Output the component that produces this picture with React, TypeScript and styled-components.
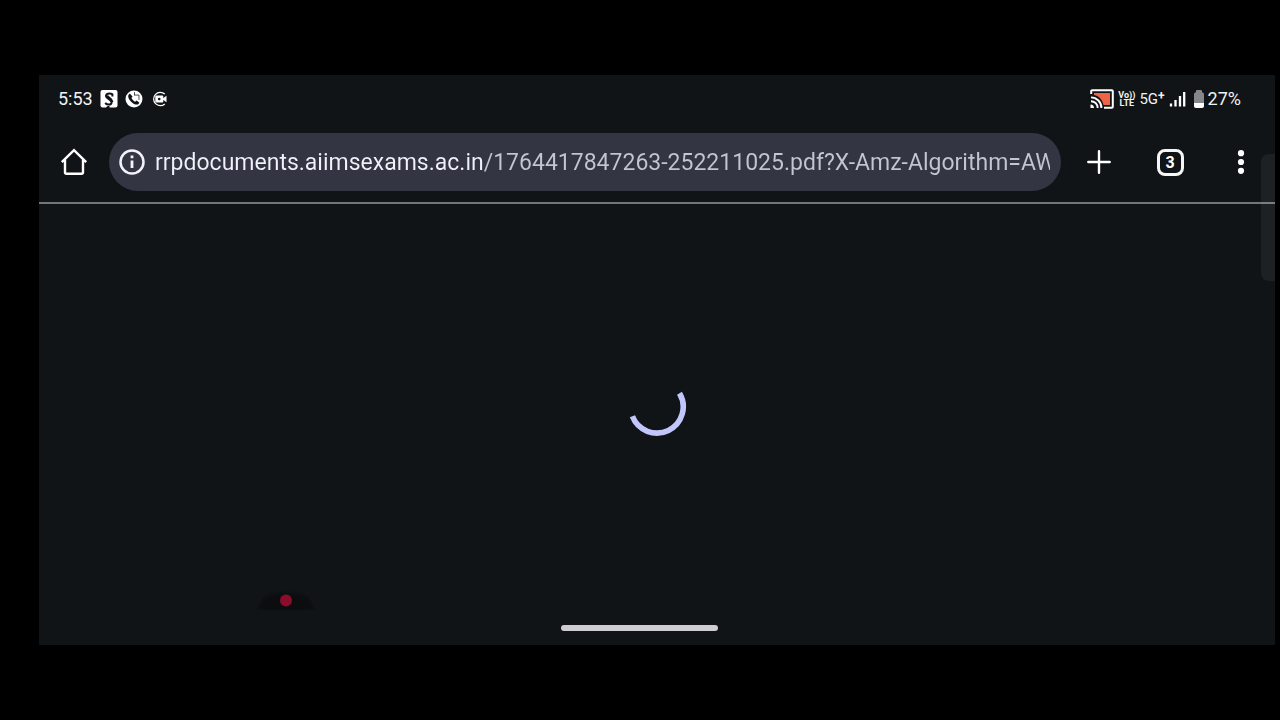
import React from "react";
import styled, { createGlobalStyle } from "styled-components";

const GlobalStyle = createGlobalStyle`
  *, *::before, *::after { box-sizing: border-box; }
  body { margin: 0; background: #000; font-family: Roboto, "Noto Sans", sans-serif; }
`;

const Page = styled.div`
  display: flex;
  min-height: 100vh;
  padding: 75px 5px 75px 39px;
  background: #000;
`;

const Screen = styled.div`
  position: relative;
  display: flex;
  flex: 1;
  flex-direction: column;
  min-width: 0;
  background: #101416;
  color: #fff;
`;

const StatusBar = styled.header`
  display: flex;
  align-items: center;
  justify-content: space-between;
  height: 47px;
  padding: 0 34px 0 19px;
`;

const StatusGroup = styled.div<{ $gap: number }>`
  display: flex;
  align-items: center;
  gap: ${(p) => p.$gap}px;
`;

const StatusText = styled.span<{ $size: number }>`
  font-size: ${(p) => p.$size}px;
  line-height: 20px;
  color: #f1f2f3;
`;

const NetworkLabel = styled.span`
  display: flex;
  align-items: flex-start;
  font-size: 15px;
  line-height: 20px;
  color: #f1f2f3;
`;

const NetworkPlus = styled.span`
  font-size: 12px;
  font-weight: 700;
  line-height: 15px;
`;

const VolteLabel = styled.span`
  display: flex;
  flex-direction: column;
  align-items: center;
  font-size: 9px;
  font-weight: 700;
  line-height: 8px;
  color: #f1f2f3;
`;

const Battery = styled.span`
  display: flex;
  padding-left: 4px;
`;

const Toolbar = styled.nav`
  display: flex;
  align-items: center;
  padding: 11px 17px 11px 18px;
  border-bottom: 2px solid #737678;
`;

const IconButton = styled.button`
  display: flex;
  flex: none;
  align-items: center;
  justify-content: center;
  width: 34px;
  height: 34px;
  padding: 0;
  border: 0;
  background: none;
  color: #fff;
  cursor: pointer;
`;

const AddressBar = styled.form`
  display: flex;
  flex: 1;
  align-items: center;
  gap: 6px;
  min-width: 0;
  height: 58px;
  margin: 0 21px 0 18px;
  padding: 0 11px 0 6px;
  border-radius: 29px;
  background: #333642;
`;

const AddressInput = styled.input`
  flex: 1;
  min-width: 0;
  height: 40px;
  padding: 0;
  border: 0;
  outline: 0;
  font: 400 23px Roboto, sans-serif;
  color: transparent;
  caret-color: #fff;
  background: linear-gradient(90deg, #f0f1fa 329px, #c3c5d2 329px);
  background-clip: text;
  -webkit-background-clip: text;
`;

const Actions = styled.div`
  display: flex;
  align-items: center;
  gap: 37px;
`;

const TabsButton = styled(IconButton)`
  font: 700 16px Roboto, sans-serif;
`;

const TabsFrame = styled.span`
  display: flex;
  align-items: center;
  justify-content: center;
  width: 27px;
  height: 27px;
  border: 3px solid #f6f6f8;
  border-radius: 8px;
`;

const Content = styled.main`
  display: flex;
  flex: 1;
  align-items: center;
  justify-content: center;
`;

const GestureArea = styled.footer`
  display: flex;
  align-items: center;
  justify-content: center;
  height: 35px;
  padding-right: 35px;
`;

const GestureBar = styled.div`
  width: 157px;
  height: 6px;
  border-radius: 3px;
  background: #cfcdd0;
`;

const EdgeHandle = styled.div`
  position: absolute;
  top: 79px;
  right: 0;
  width: 14px;
  height: 127px;
  border-radius: 8px 0 0 8px;
  background: rgba(255, 255, 255, 0.06);
`;

const TouchMarker = styled.svg`
  position: absolute;
  left: 217px;
  bottom: 32px;
`;

const RecorderIcon = () => (
  <svg width="18" height="18" viewBox="0 0 18 18" aria-hidden="true">
    <rect x="0.500" y="0" width="17" height="17.500" rx="2" fill="#fff" />
    <path d="M12.400 6.600V4.200C11.600 3.600 10.600 3.400 9.400 3.400 7.400 3.400 6 4.400 6 6c0 3.200 5.600 3 5.600 6.200 0 1.600-1.200 2.400-2.800 2.400-1.500 0-2.800-.7-3.600-1.600" fill="none" stroke="#101416" strokeWidth="2" />
    <path d="M6.800 5.500c.6 2.600 5 3 5.200 6.500" fill="none" stroke="#101416" strokeWidth="3" />
    <path d="M6 18c.4-1.500 1.500-2.300 3.500-2.300V18z" fill="#101416" />
  </svg>
);

const CallIcon = () => (
  <svg width="18" height="18" viewBox="0 0 17 17" aria-hidden="true">
    <circle cx="8.500" cy="8.500" r="8" fill="#fff" />
    <path d="M4.600 3.400 3.200 4.700c-.7 1.600.4 4.200 2.600 6.300 2.200 2.200 4.800 3.300 6.500 2.600l1.300-1.500-2.600-2.200-1.500 1.100c-1.500-.7-2.800-2-3.400-3.400l1-1.500z" fill="#101416" />
    <path d="M8.500 4.800h4.700v4.500M9 2v2.800" fill="none" stroke="#101416" strokeWidth="0.700" />
  </svg>
);

const CameraIcon = () => (
  <svg width="18" height="18" viewBox="-2 -1 18 18" aria-hidden="true">
    <path d="M12.800 3A6.700 6.700 0 1 0 12.800 13" fill="none" stroke="#fff" strokeWidth="1.200" />
    <rect x="3.300" y="4.400" width="8" height="7.200" rx="1" fill="#fff" />
    <path d="M11 7.300 14.500 4.800v6.400l-3.500-2.500z" fill="#fff" />
    <circle cx="7.200" cy="8" r="1.300" fill="#101416" />
  </svg>
);

const CastIcon = () => (
  <svg width="24" height="20" viewBox="0 0 24 20" aria-hidden="true">
    <path d="M4 4h16v12h-6.500C12.500 11 9.500 7 4 6z" fill="#ee6546" />
    <path d="M1.200 5V2.200c0-.6.4-1 1-1h19.600c.6 0 1 .4 1 1v15.600c0 .6-.4 1-1 1H14" fill="none" stroke="#fff" strokeWidth="2" />
    <path d="M1 8.400A10.400 10.400 0 0 1 11.400 19M1 12.200A6.700 6.700 0 0 1 7.700 19" fill="none" stroke="#fff" strokeWidth="1.900" />
    <path d="M0.500 15.500A3.600 3.600 0 0 1 4 19H0.500z" fill="#fff" />
  </svg>
);

const SignalIcon = () => (
  <svg width="17" height="16" viewBox="0 0 17 16" aria-hidden="true">
    <path d="M2 12.500V15.500M6.500 9V15.500M11 5V15.500M15.200 1V15.500" stroke="#fff" strokeWidth="2.300" />
  </svg>
);

const BatteryIcon = () => (
  <svg width="10" height="18" viewBox="0 0 10 18" aria-hidden="true">
    <path d="M2 2.200V1.200C2 .5 2.500 0 3.200 0h3.600C7.500 0 8 .5 8 1.200v1C9.300 2.400 10 3 10 4.200V13H0V4.200C0 3 .7 2.400 2 2.200z" fill="#85878a" />
    <path d="M0 13h10v3c0 1.300-.7 2-2 2H2c-1.300 0-2-.7-2-2z" fill="#fff" />
  </svg>
);

const HomeIcon = () => (
  <svg width="28" height="28" viewBox="0 0 28 28" aria-hidden="true">
    <path d="M1.800 14.200 14 2.200 26.200 14.200M5 11.800V24.200c0 1 .5 1.500 1.500 1.500h15c1 0 1.500-.5 1.500-1.500V11.800" fill="none" stroke="#fff" strokeWidth="2.400" />
  </svg>
);

const InfoIcon = () => (
  <svg width="26" height="26" viewBox="0 0 26 26" aria-hidden="true">
    <circle cx="13" cy="13" r="11.500" fill="none" stroke="#f1f2fa" strokeWidth="2.500" />
    <path d="M13 11.500V19M13 6.500V9.300" stroke="#f1f2fa" strokeWidth="2.800" />
  </svg>
);

const PlusIcon = () => (
  <svg width="24" height="24" viewBox="0 0 24 24" aria-hidden="true">
    <path d="M12 1.300V22.700M1.300 12H22.700" stroke="#fff" strokeWidth="2.400" strokeLinecap="round" />
  </svg>
);

const MenuIcon = () => (
  <svg width="8" height="26" viewBox="0 0 8 26" aria-hidden="true">
    <circle cx="4" cy="4.200" r="3.100" fill="#fff" />
    <circle cx="4" cy="13" r="3.100" fill="#fff" />
    <circle cx="4" cy="21.800" r="3.100" fill="#fff" />
  </svg>
);

const Spinner = () => (
  <svg width="60" height="60" viewBox="0 0 60 60" role="img" aria-label="Loading">
    <path d="M52.500 16.300A26.300 26.300 0 1 1 5.400 39.300" fill="none" stroke="#c3c6fb" strokeWidth="5.600" />
  </svg>
);

export default function App() {
  return (
    <>
      <GlobalStyle />
      <Page>
        <Screen>
          <StatusBar>
            <StatusGroup $gap={7}>
              <StatusText $size={18}>5:53</StatusText>
              <RecorderIcon />
              <CallIcon />
              <CameraIcon />
            </StatusGroup>
            <StatusGroup $gap={4}>
              <CastIcon />
              <VolteLabel>
                <span>Vo))</span>
                <span>LTE</span>
              </VolteLabel>
              <NetworkLabel>
                5G<NetworkPlus>+</NetworkPlus>
              </NetworkLabel>
              <SignalIcon />
              <Battery>
                <BatteryIcon />
              </Battery>
              <StatusText $size={18}>27%</StatusText>
            </StatusGroup>
          </StatusBar>
          <Toolbar aria-label="Browser toolbar">
            <IconButton type="button" aria-label="Home">
              <HomeIcon />
            </IconButton>
            <AddressBar onSubmit={(e) => e.preventDefault()}>
              <IconButton type="button" aria-label="Site information">
                <InfoIcon />
              </IconButton>
              <AddressInput
                aria-label="Address"
                spellCheck={false}
                defaultValue="rrpdocuments.aiimsexams.ac.in/1764417847263-252211025.pdf?X-Amz-Algorithm=AW"
              />
            </AddressBar>
            <Actions>
              <IconButton type="button" aria-label="New tab">
                <PlusIcon />
              </IconButton>
              <TabsButton type="button">
                <TabsFrame>3</TabsFrame>
              </TabsButton>
              <IconButton type="button" aria-label="Menu">
                <MenuIcon />
              </IconButton>
            </Actions>
          </Toolbar>
          <Content>
            <Spinner />
          </Content>
          <GestureArea>
            <GestureBar />
          </GestureArea>
          <EdgeHandle />
          <TouchMarker width="60" height="28" viewBox="0 0 60 28" aria-hidden="true">
            <defs>
              <radialGradient id="marker-shade" cx="0.500" cy="0.800" r="0.600">
                <stop offset="0.600" stopColor="#0b0d0f" />
                <stop offset="1" stopColor="#0b0d0f" stopOpacity="0" />
              </radialGradient>
            </defs>
            <path d="M0 25C8 8 18 0 30 0s22 8 30 25z" fill="url(#marker-shade)" />
            <circle cx="30" cy="15.500" r="6" fill="#8c0c2b" />
          </TouchMarker>
        </Screen>
      </Page>
    </>
  );
}
